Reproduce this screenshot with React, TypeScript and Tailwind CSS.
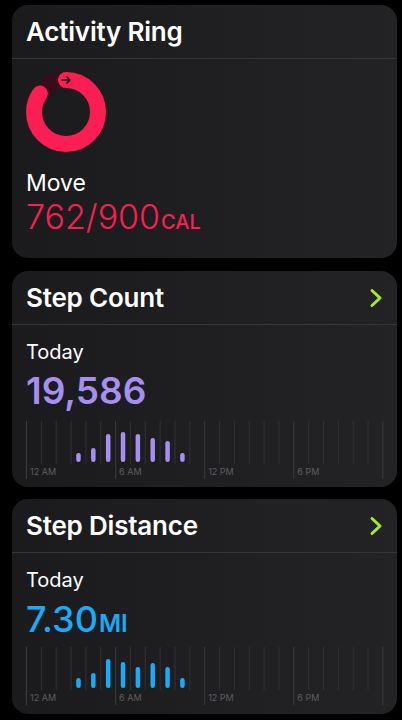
import React from 'react';

const FONT = { fontFamily: 'Inter, "Noto Sans", "Liberation Sans", sans-serif' };

interface ChartProps {
  bars: number[];
  color: string;
}

const HourChart: React.FC<ChartProps> = ({ bars, color }) => {
  const step = 14.85;
  const lines = Array.from({ length: 25 }, (_, i) => i);
  const labels = ['12 AM', '6 AM', '12 PM', '6 PM'];
  return (
    <svg width="362" height="60" viewBox="0 0 362 60" className="block">
      {lines.map((i) => {
        const x = 0.5 + i * step;
        const major = i % 6 === 0;
        return (
          <line
            key={i}
            x1={x}
            x2={x}
            y1={0}
            y2={major ? 58 : 43}
            stroke={major ? '#3c3c3f' : '#323234'}
            strokeWidth={1}
          />
        );
      })}
      {labels.map((t, i) => (
        <text
          key={t}
          x={4 + i * 6 * step}
          y={54}
          fontSize="9"
          fill="#5d5d61"
          style={FONT}
        >
          {t}
        </text>
      ))}
      {bars.map((h, i) => {
        const cx = 0.5 + (i + 3.5) * step;
        return (
          <rect
            key={i}
            x={cx - 2.25}
            y={41 - h}
            width={4.5}
            height={h}
            rx={2.25}
            fill={color}
          />
        );
      })}
    </svg>
  );
};

const Chevron = () => (
  <svg width="14" height="20" viewBox="0 0 14 20" fill="none">
    <path d="M3 2.5 L11 10 L3 17.5" stroke="#a3ee1c" strokeWidth="3" strokeLinecap="round" strokeLinejoin="round" />
  </svg>
);

const Ring = () => {
  const r = 32;
  const c = 2 * Math.PI * r;
  const p = (762 / 900) * c;
  return (
    <svg width="80" height="80" viewBox="0 0 80 80" className="block">
      <circle cx="40" cy="40" r={r} fill="none" stroke="#3a0c19" strokeWidth="16" />
      <circle
        cx="40"
        cy="40"
        r={r}
        fill="none"
        stroke="#fb1e52"
        strokeWidth="16"
        strokeLinecap="round"
        strokeDasharray={`${p} ${c}`}
        transform="rotate(-90 40 40)"
      />
      <path d="M36 8 H44 M41 5 L44 8 L41 11" stroke="#111" strokeWidth="1.6" fill="none" strokeLinecap="round" strokeLinejoin="round" />
    </svg>
  );
};

const Card: React.FC<{ title: string; chevron?: boolean; children: React.ReactNode }> = ({ title, chevron, children }) => (
  <div className="ml-3 w-[385px] rounded-2xl bg-gradient-to-r from-[#1b1b1d] to-[#232325] overflow-hidden">
    <div className="h-[54px] flex items-center justify-between pl-[14px] pr-[14px] border-b border-[#363638]">
      <span className="text-[26px] font-semibold text-white tracking-[-0.2px]">{title}</span>
      {chevron && <Chevron />}
    </div>
    {children}
  </div>
);

export default function App() {
  return (
    <div className="min-h-screen w-[402px] bg-black pt-[5px]" style={FONT}>
      <Card title="Activity Ring">
        <div className="pl-[14px] pt-[13px] pb-[21px]">
          <Ring />
          <div className="mt-[17px] text-[23px] leading-[28px] text-white">Move</div>
          <div className="h-[40px] flex items-baseline text-[#fb1e52]">
            <span className="text-[34px] font-light leading-[40px]">762/900</span>
            <span className="text-[20px] font-medium ml-[1px]">CAL</span>
          </div>
        </div>
      </Card>

      <div className="mt-[13px]">
        <Card title="Step Count" chevron>
          <div className="pl-[14px] pt-[15px] pb-[6px]">
            <div className="text-[20px] leading-[24px] text-white">Today</div>
            <div className="mt-[7px] text-[37px] font-semibold leading-[40px] text-[#a68ff0]">19,586</div>
            <div className="mt-[10px]">
              <HourChart bars={[9, 14, 28, 30, 28, 24, 21, 9]} color="#a68ff0" />
            </div>
          </div>
        </Card>
      </div>

      <div className="mt-3">
        <Card title="Step Distance" chevron>
          <div className="pl-[14px] pt-[15px] pb-[7px]">
            <div className="text-[20px] leading-[24px] text-white">Today</div>
            <div className="mt-[7px] h-[40px] flex items-baseline text-[#19aaf8]">
              <span className="text-[36px] font-medium leading-[40px]">7.30</span>
              <span className="text-[24px] font-semibold ml-[1px]">MI</span>
            </div>
            <div className="mt-[8px]">
              <HourChart bars={[10, 15, 29, 26, 21, 25, 21, 10]} color="#19aaf8" />
            </div>
          </div>
        </Card>
      </div>
    </div>
  );
}
